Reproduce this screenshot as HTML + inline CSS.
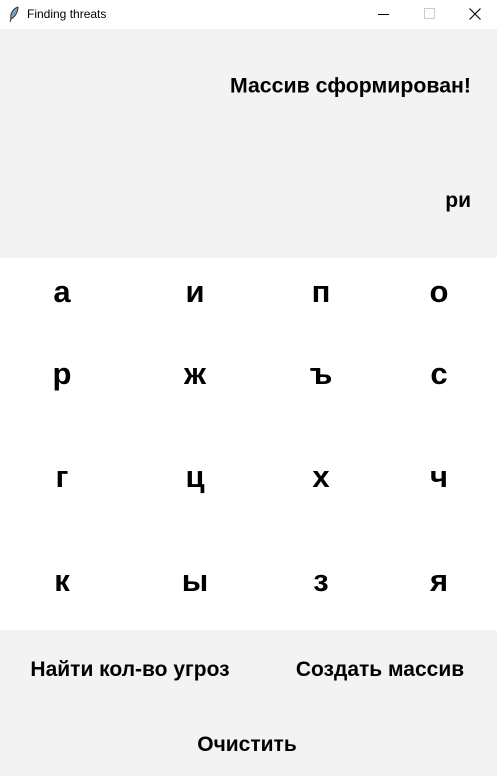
<!DOCTYPE html>
<html><head><meta charset="utf-8"><style>
body{margin:0;width:497px;height:776px;position:relative;font-family:"Liberation Sans",Arial,sans-serif;background:#fff;overflow:hidden}
.t{position:absolute;white-space:nowrap;font-weight:bold;color:#000}
.c{transform:translate(-50%,-50%)}
.r{transform:translateY(-50%)}
.L{font-size:31px}
.B{font-size:21px}
</style></head><body>
<div style="position:absolute;left:0;top:0;width:497px;height:29px;background:#fff"></div>
<svg style="position:absolute;left:8px;top:6px" width="12" height="17" viewBox="0 0 12 17"><path d="M10 1 C4 3 2 9 3 13 L2 16 M3 13 C7 11 10 6 10 1" stroke="#333" fill="#7aa0d0" stroke-width="1"/></svg>
<div style="position:absolute;left:27px;top:7px;font-size:12px;font-family:'Liberation Sans',sans-serif">Finding threats</div>
<div style="position:absolute;left:378px;top:14px;width:11px;height:1px;background:#000"></div>
<div style="position:absolute;left:424px;top:8px;width:9px;height:9px;border:1px solid #ccc"></div>
<svg style="position:absolute;left:469px;top:8px" width="12" height="12"><path d="M0.5 0.5L11.5 11.5M11.5 0.5L0.5 11.5" stroke="#000" stroke-width="1.1"/></svg>
<div style="position:absolute;left:0;top:29px;width:497px;height:229px;background:#f3f3f3"></div>
<div style="position:absolute;left:0;top:630px;width:497px;height:146px;background:#f3f3f3"></div>
<div class="t B r" style="right:26px;top:86px;font-size:21.3px">Массив сформирован!</div>
<div class="t B r" style="right:26px;top:201px">ри</div>
<div class="t L c" style="left:62px;top:292px">а</div>
<div class="t L c" style="left:195px;top:292px">и</div>
<div class="t L c" style="left:321px;top:292px">п</div>
<div class="t L c" style="left:439px;top:292px">о</div>
<div class="t L c" style="left:62px;top:374px">р</div>
<div class="t L c" style="left:195px;top:374px">ж</div>
<div class="t L c" style="left:321px;top:374px">ъ</div>
<div class="t L c" style="left:439px;top:374px">с</div>
<div class="t L c" style="left:62px;top:477px">г</div>
<div class="t L c" style="left:195px;top:477px">ц</div>
<div class="t L c" style="left:321px;top:477px">х</div>
<div class="t L c" style="left:439px;top:477px">ч</div>
<div class="t L c" style="left:62px;top:581px">к</div>
<div class="t L c" style="left:195px;top:581px">ы</div>
<div class="t L c" style="left:321px;top:581px">з</div>
<div class="t L c" style="left:439px;top:581px">я</div>
<div class="t B c" style="left:130px;top:670px">Найти кол-во угроз</div>
<div class="t B c" style="left:380px;top:670px">Создать массив</div>
<div class="t B c" style="left:247px;top:745px">Очистить</div>
</body></html>
